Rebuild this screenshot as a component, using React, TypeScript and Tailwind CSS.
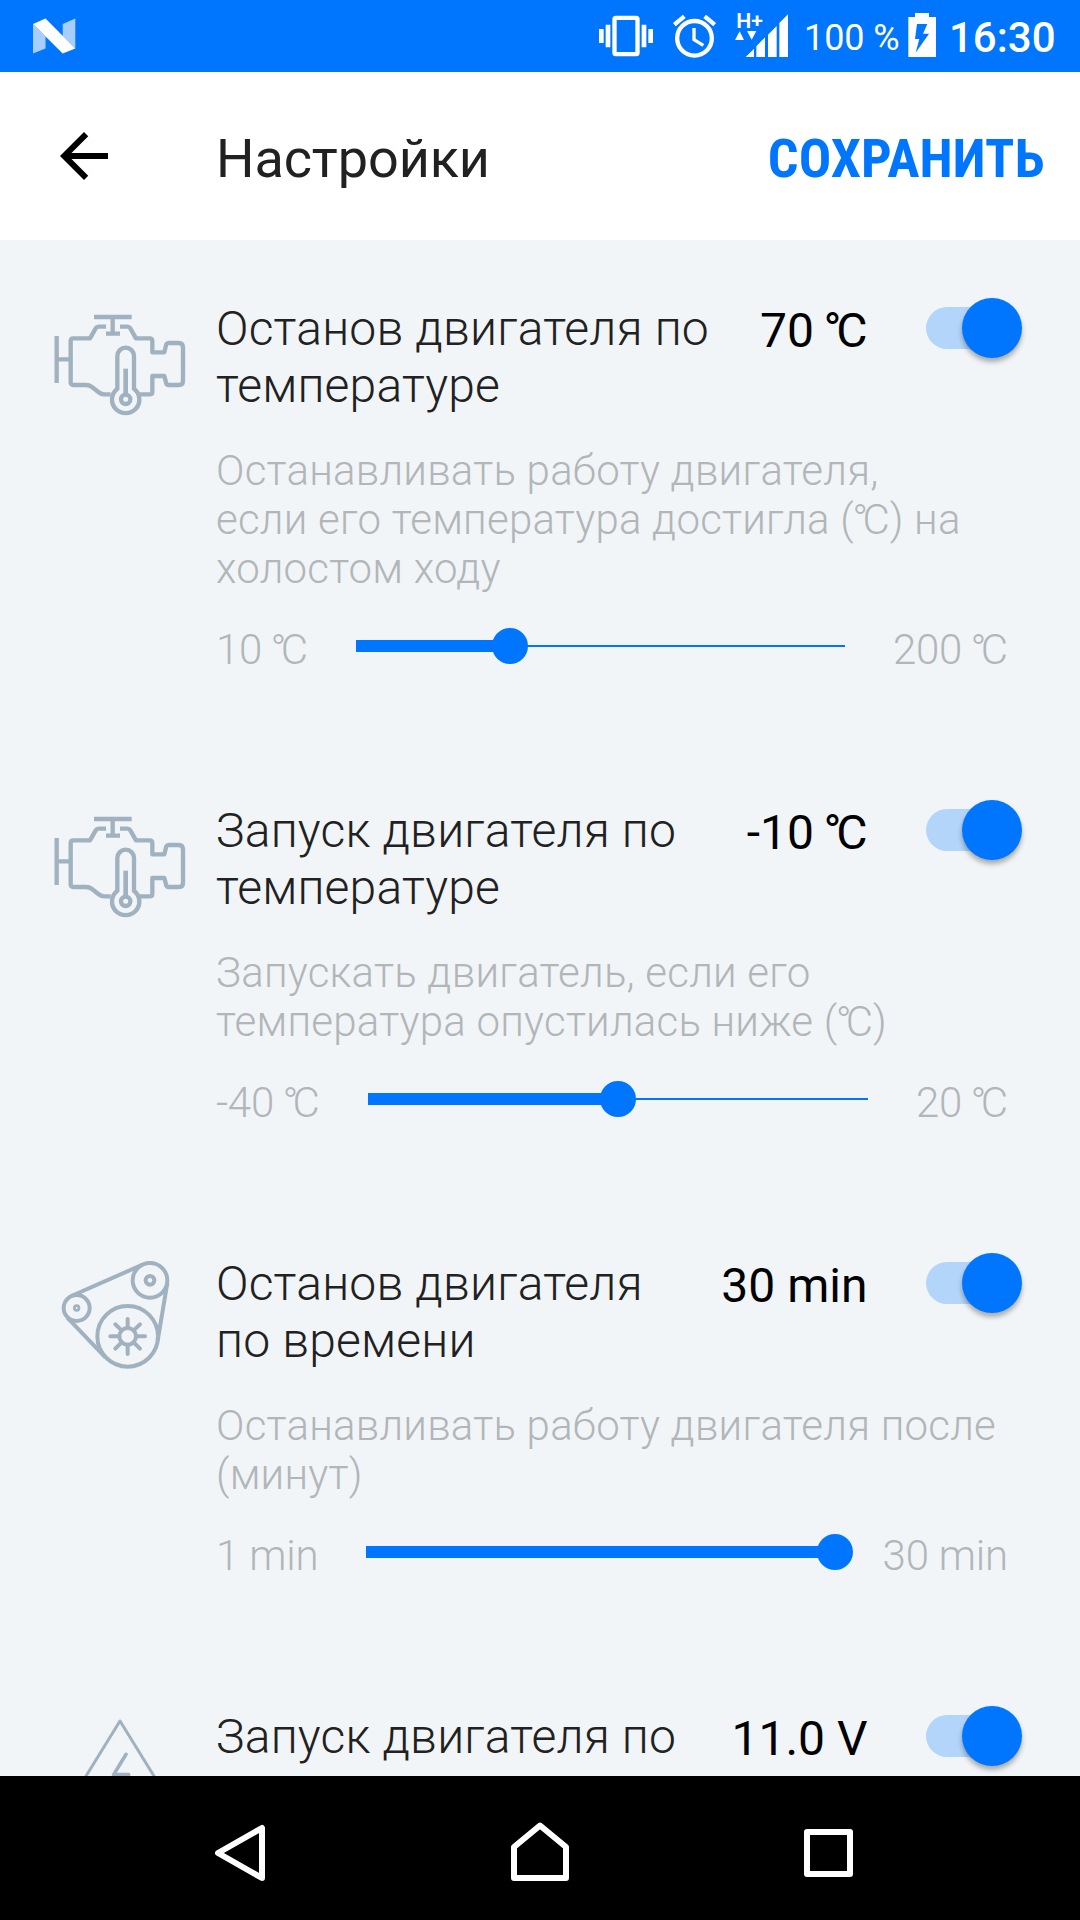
import React, { useState } from "react";

type Setting = {
  id: number;
  icon: React.ReactNode;
  title: string[];
  description?: string[];
  unit: string;
  value: number;
  range?: [number, number];
  digits?: number;
};

const EngineIcon = () => (
  <svg
    viewBox="-90 -15 648 450"
    className="w-[216px] h-[150px] shrink-0"
    fill="none"
    stroke="#a0b1bf"
    strokeWidth={13}
  >
    <path d="M80 138V279M86 208H122M192 81H305M248 86V130M228 131H270" />
    <path
      strokeLinejoin="round"
      d="M228 110H206Q200 110 197 115L180 145H130Q122 145 122 153V277Q122 285 130 285H168Q178 285 186 291L205 306Q213 313 222 313H242"
    />
    <path
      strokeLinejoin="round"
      d="M270 110H292Q298 110 301 115L318 145H359Q367 145 367 153V187H403L409 163Q411 159 416 159H446Q459 159 459 172V272Q459 285 446 285H416Q411 285 409 281L403 258H367V305Q367 313 359 313H330"
    />
    <path d="M262 296V198A25 25 0 0 1 312 198V296A41 41 0 1 1 262 296Z" />
    <path d="M287 236V312" strokeWidth={14} />
    <circle cx={287} cy={328} r={14} />
  </svg>
);

const BeltIcon = () => (
  <svg
    viewBox="-120 0 648 450"
    className="w-[216px] h-[150px] shrink-0"
    fill="none"
    stroke="#a0b1bf"
    strokeWidth={12}
  >
    <circle cx={110} cy={204} r={39} />
    <circle cx={110} cy={204} r={7} strokeWidth={8} />
    <circle cx={330} cy={121} r={52} />
    <circle cx={330} cy={121} r={13} />
    <circle cx={263} cy={289} r={91} />
    <circle cx={263} cy={289} r={25} />
    <path d="M94 168L308 74M382 129L353 302M82 233L196 352" />
    <path
      strokeLinecap="round"
      d="M263 264V237M263 314V342M238 289H211M288 289H315M245 271L226 253M281 271L300 253M245 307L226 326M281 307L300 326"
    />
  </svg>
);

const VoltageIcon = () => (
  <svg
    viewBox="-180 9 648 450"
    className="w-[216px] h-[150px] shrink-0"
    fill="none"
    stroke="#a0b1bf"
    strokeWidth={9}
    strokeLinecap="round"
    strokeLinejoin="round"
  >
    <path d="M180 93L14 362H346Z" />
    <path d="M198 193L161 254H206L169 315" strokeWidth={11} />
  </svg>
);

const settings: Setting[] = [
  {
    id: 1,
    icon: <EngineIcon />,
    title: ["Останов двигателя по", "температуре"],
    description: [
      "Останавливать работу двигателя,",
      "если его температура достигла (°C) на",
      "холостом ходу",
    ],
    unit: "°C",
    value: 70,
    range: [10, 200],
  },
  {
    id: 2,
    icon: <EngineIcon />,
    title: ["Запуск двигателя по", "температуре"],
    description: ["Запускать двигатель, если его", "температура опустилась ниже (°C)"],
    unit: "°C",
    value: -10,
    range: [-40, 20],
  },
  {
    id: 3,
    icon: <BeltIcon />,
    title: ["Останов двигателя", "по времени"],
    description: ["Останавливать работу двигателя после", "(минут)"],
    unit: "min",
    value: 30,
    range: [1, 30],
  },
  {
    id: 4,
    icon: <VoltageIcon />,
    title: ["Запуск двигателя по"],
    unit: "V",
    value: 11,
    digits: 1,
  },
];

// sets every °C tight, the rest of the text stays as it is
function Degrees({ text, bold = false }: { text: string; bold?: boolean }) {
  return (
    <>
      {text.split(/(°C)/).map((part, index) =>
        part === "°C" ? (
          <span
            key={index}
            className={
              bold
                ? "-ml-[0.05em] tracking-[-0.105em] mr-[0.105em]"
                : "-ml-[0.04em] tracking-[-0.135em] mr-[0.135em]"
            }
          >
            {part}
          </span>
        ) : (
          part
        )
      )}
    </>
  );
}

function StatusBar() {
  return (
    <div className="h-[72px] shrink-0 bg-[#0076ff] flex items-center text-white">
      <svg viewBox="0 0 108 72" className="w-[108px] h-[72px]" fill="#fff">
        <path opacity={0.65} d="M33 24V53.5L45.5 48.5V36.5Z" />
        <path opacity={0.65} d="M62.7 24L75.3 18.5V48.5L62.7 36Z" />
        <path d="M33 24L45.5 18.5L75.3 48.5L62.7 53.5Z" />
      </svg>
      <svg viewBox="54 0 168 216" className="w-14 h-[72px] ml-[490px]" fill="#fff">
        <path d="M57 87H71V129H57ZM77 74H91V142H77ZM185 74H199V142H185ZM205 87H219V129H205Z" />
        <rect x={103.5} y={53.5} width={69} height={109} rx={4} fill="none" stroke="#fff" strokeWidth={13} />
      </svg>
      <svg
        viewBox="276 0 135 216"
        className="w-[45px] h-[72px] ml-[18px]"
        fill="none"
        stroke="#fff"
        strokeWidth={13}
      >
        <circle cx={343.5} cy={115} r={52} />
        <path d="M283 74L313 49M404 74L374 49" />
        <path d="M342 84V119L370 136" strokeWidth={10} />
      </svg>
      <svg viewBox="462 0 165 216" className="w-[55px] h-[72px] ml-[17px]" fill="#fff">
        <text x={469} y={83} fontSize={60} fontWeight={600} fontFamily="Roboto" textLength={80} lengthAdjust="spacingAndGlyphs">
          H+
        </text>
        <path d="M465 120L479 94L492 120ZM501 93H529L515 119Z" />
        <path d="M497 171L522 146V171ZM529 139L555 112V171H529ZM564 104L590 78V171H564ZM598 69L624 43V171H598Z" />
      </svg>
      <span className="w-[118px] pl-[15px] text-[36px] leading-[72px] pt-1 whitespace-nowrap tracking-[-0.1px]">100 %</span>
      <svg viewBox="981 0 90 216" className="w-[30px] h-[72px]" fill="#fff">
        <path
          fillRule="evenodd"
          d="M985 51H1005V39H1047V51H1068V171H985ZM1011 72H1042L1029 101H1047L1007 158L1018 117H1005Z"
        />
      </svg>
      <span className="pl-3 text-[42px] font-medium leading-[72px] pt-1">16:30</span>
    </div>
  );
}

function Header() {
  return (
    <header className="h-[168px] shrink-0 bg-white flex items-center">
      <svg viewBox="0 0 24 24" className="w-[72px] h-[72px] ml-12">
        <path d="M20 11H7.83l5.59-5.59L12 4l-8 8 8 8 1.41-1.41L7.83 13H20v-2z" />
      </svg>
      <h1 className="ml-24 pt-1.5 text-[54px] leading-[64px] tracking-[-0.1px] text-[#212121]">Настройки</h1>
      <button className="ml-auto mr-[35.5px] pt-1.5 text-[54px] leading-[64px] font-bold tracking-[0.1px] text-[#0076ff] font-['Roboto_Condensed',Roboto,sans-serif]">
        СОХРАНИТЬ
      </button>
    </header>
  );
}

function Toggle({ on, onClick }: { on: boolean; onClick: () => void }) {
  return (
    <button
      onClick={onClick}
      className={`w-24 h-[60px] flex items-center ${on ? "justify-end" : "justify-start"}`}
    >
      <span className="w-[80px] h-[42px] -mr-11 rounded-full bg-[#b3d5fa]" />
      <span className="relative w-[60px] h-[60px] shrink-0 rounded-full bg-[#0076ff] shadow-[0_4px_5px_rgba(0,0,0,0.3)]" />
    </button>
  );
}

function Slider({ value, min, max }: { value: number; min: number; max: number }) {
  const percent = ((value - min) / (max - min)) * 100;

  return (
    <div className="flex-1 h-9 mx-12 mb-[7px] flex items-center">
      <div className="h-3 bg-[#0076ff]" style={{ width: `${percent}%` }} />
      <div className="w-9 h-9 -mx-[18px] shrink-0 rounded-full bg-[#0076ff]" />
      <div className="h-0.5 flex-1 bg-[#0076ff]" />
    </div>
  );
}

function SettingItem({ setting }: { setting: Setting }) {
  const [on, setOn] = useState(true);
  const { icon, title, description, unit, value, range, digits = 0 } = setting;

  return (
    <section className="flex items-start pb-[113px]">
      {icon}
      <div className="flex-1 pt-[15px]">
        <div className="flex items-start">
          <h2 className="flex-1 text-[48px] leading-[57px] font-light tracking-[0.18px] text-[#212121] whitespace-nowrap">
            {title.map((line) => (
              <span key={line} className="block">
                {line}
              </span>
            ))}
          </h2>
          <span className="pt-0.5 text-[48px] leading-[57px] text-black whitespace-nowrap">
            <Degrees text={`${value.toFixed(digits)} ${unit}`} bold />
          </span>
          <div className="ml-[58.5px] mr-[58px] -mt-0.5">
            <Toggle on={on} onClick={() => setOn(!on)} />
          </div>
        </div>
        {description && (
          <p className="mt-8 text-[42px] leading-[49px] font-light tracking-[0.22px] text-[#b2b6b9] whitespace-nowrap">
            {description.map((line) => (
              <span key={line} className="block">
                <Degrees text={line} />
              </span>
            ))}
          </p>
        )}
        {range && (
          <div className="mt-8 mr-[72px] h-[49px] flex items-center text-[42px] leading-[49px] font-light tracking-[-0.2px] text-[#b2b6b9]">
            <span>
              <Degrees text={`${range[0]} ${unit}`} />
            </span>
            <Slider value={value} min={range[0]} max={range[1]} />
            <span>
              <Degrees text={`${range[1]} ${unit}`} />
            </span>
          </div>
        )}
      </div>
    </section>
  );
}

function NavBar() {
  return (
    <nav className="h-36 shrink-0 bg-black">
      <svg
        viewBox="0 0 1080 144"
        className="w-full h-full"
        fill="none"
        stroke="#fff"
        strokeWidth={6}
        strokeLinejoin="round"
      >
        <path d="M262 52V102L218 77Z" />
        <path d="M514 102V71L540 49.5L566 71V102Z" />
        <path d="M807 56H850V98H807Z" />
      </svg>
    </nav>
  );
}

function App() {
  return (
    <div className="w-[1080px] h-[1920px] overflow-hidden flex flex-col bg-[#f1f5f8] font-[Roboto,'Noto_Sans',sans-serif]">
      <StatusBar />
      <Header />
      <main className="flex-1 min-h-0 overflow-hidden pt-[45px]">
        {settings.map((setting) => (
          <SettingItem key={setting.id} setting={setting} />
        ))}
      </main>
      <NavBar />
    </div>
  );
}

export default App;
